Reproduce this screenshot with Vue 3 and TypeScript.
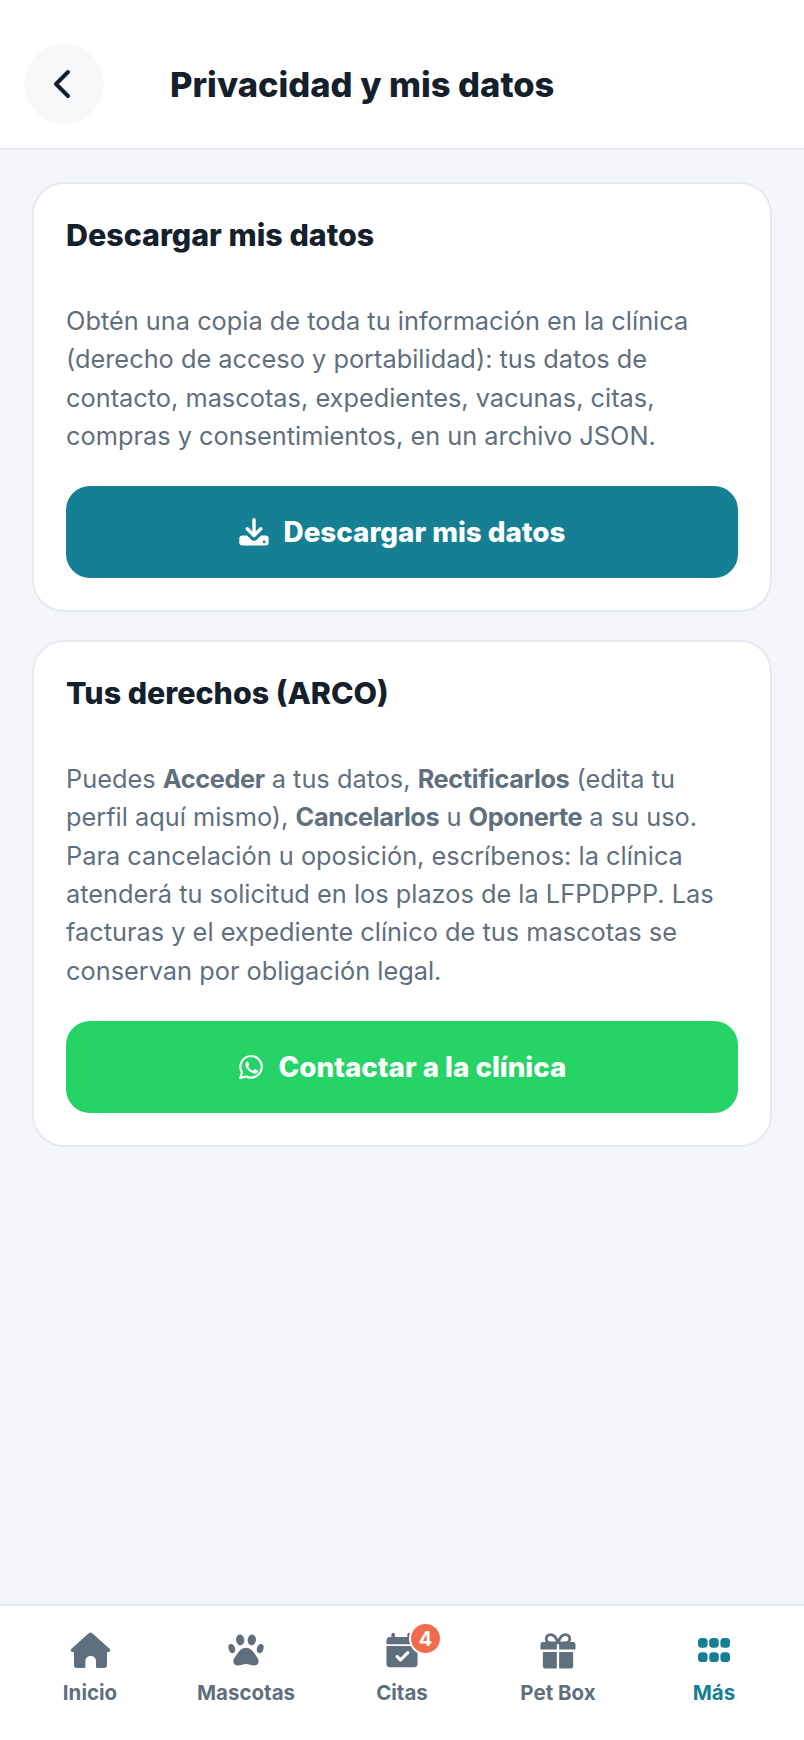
<script setup lang="ts">
const tabs = [
  { label: 'Inicio', icon: 'home', active: false },
  { label: 'Mascotas', icon: 'paw', active: false },
  { label: 'Citas', icon: 'cal', active: false, badge: 4 },
  { label: 'Pet Box', icon: 'gift', active: false },
  { label: 'Más', icon: 'grid', active: true },
]
</script>

<template>
  <div class="page">
    <header class="top">
      <button class="back" aria-label="Volver">
        <svg width="32" height="36" viewBox="0 0 32 36" fill="none" stroke="#14202b" stroke-width="4" stroke-linecap="round" stroke-linejoin="round"><path d="M20 6 8 18l12 12"/></svg>
      </button>
      <h1>Privacidad y mis datos</h1>
    </header>

    <main class="content">
      <section class="card">
        <h2>Descargar mis datos</h2>
        <p>Obtén una copia de toda tu información en la clínica (derecho de acceso y portabilidad): tus datos de contacto, mascotas, expedientes, vacunas, citas, compras y consentimientos, en un archivo JSON.</p>
        <button class="btn teal">
          <svg width="30" height="28" viewBox="0 0 30 28" fill="#fff"><path d="M13.300 1.800a1.700 1.700 0 0 1 3.400 0v11.600l3.900-3.900a1.700 1.700 0 0 1 2.400 2.400l-6.800 6.800a1.700 1.700 0 0 1-2.400 0l-6.800-6.800a1.700 1.700 0 0 1 2.400-2.400l3.900 3.900z"/><path d="M3.500 17.500H8l4 4a4.200 4.200 0 0 0 6 0l4-4h4.500a3.200 3.200 0 0 1 3.200 3.200v3.600a3.200 3.200 0 0 1-3.200 3.200H3.500a3.200 3.200 0 0 1-3.200-3.200v-3.600a3.200 3.200 0 0 1 3.200-3.200zm21.700 5a1.400 1.400 0 1 0 0 2.800 1.400 1.400 0 0 0 0-2.800z" fill-rule="evenodd"/></svg>
          <span>Descargar mis datos</span>
        </button>
      </section>

      <section class="card">
        <h2>Tus derechos (ARCO)</h2>
        <p>Puedes <b>Acceder</b> a tus datos, <b>Rectificarlos</b> (edita tu perfil aquí mismo), <b>Cancelarlos</b> u <b>Oponerte</b> a su uso. Para cancelación u oposición, escríbenos: la clínica atenderá tu solicitud en los plazos de la LFPDPPP. Las facturas y el expediente clínico de tus mascotas se conservan por obligación legal.</p>
        <button class="btn green">
          <svg width="26" height="26" viewBox="0 0 26 26" fill="none"><path d="M13.200 2a10.800 10.800 0 0 0-9.300 16.300L2.300 24l5.900-1.500A10.800 10.800 0 1 0 13.200 2z" stroke="#fff" stroke-width="2.200" stroke-linejoin="round"/><path d="M9.700 7.600c-.3 0-.8.100-1.200.6-.5.500-1.100 1.300-1.100 2.700s1.100 3 1.300 3.200c.1.200 2.100 3.400 5.300 4.600 2.600 1 3.200.8 3.700.7.600-.1 1.800-.7 2-1.400.3-.7.300-1.300.2-1.400-.1-.1-.3-.2-.6-.4l-2.200-1c-.3-.1-.5-.2-.7.100l-1 1.200c-.2.200-.4.300-.7.100-.3-.2-1.400-.5-2.600-1.600-1-.9-1.600-1.900-1.800-2.200-.2-.3 0-.5.100-.7l.5-.6.300-.5c.1-.2.100-.4 0-.6l-1-2.300c-.2-.5-.5-.5-.6-.5z" fill="#fff"/></svg>
          <span>Contactar a la clínica</span>
        </button>
      </section>
    </main>

    <nav class="tabs">
      <div v-for="t in tabs" :key="t.label" class="tab" :class="{ active: t.active }">
        <div class="icon">
          <svg v-if="t.icon === 'home'" width="41" height="36" viewBox="0 0 41 36" fill="currentColor"><path d="M20.500.5c.7 0 1.300.3 1.800.8l17.200 15.400c1.400 1.300.6 3.300-1.200 3.300H37v13a3 3 0 0 1-3 3h-6.500a1.500 1.500 0 0 1-1.500-1.500v-5.500a5.300 5.300 0 0 0-10.600 0v5.500a1.500 1.500 0 0 1-1.500 1.500H7a3 3 0 0 1-3-3V20H2.700c-1.800 0-2.600-2-1.200-3.300L18.700 1.300c.5-.5 1.100-.8 1.800-.8z"/></svg>
          <svg v-else-if="t.icon === 'paw'" width="36" height="32" viewBox="0 0 38 34" fill="currentColor"><ellipse cx="12.800" cy="6.300" rx="4.400" ry="5.800" transform="rotate(-6 12.800 6.300)"/><ellipse cx="25.200" cy="6.300" rx="4.400" ry="5.800" transform="rotate(6 25.200 6.300)"/><ellipse cx="3.900" cy="15.500" rx="3.400" ry="5" transform="rotate(-18 3.900 15.500)"/><ellipse cx="34.100" cy="15.500" rx="3.400" ry="5" transform="rotate(18 34.100 15.500)"/><path d="M19 14.500c4.500 0 7.500 3.500 10 7.500 1.600 2.600 3.500 4.500 3.500 7 0 3-2.400 4.500-5 4.500-2.800 0-5.500-1.500-8.500-1.500s-5.700 1.500-8.500 1.500c-2.600 0-5-1.500-5-4.500 0-2.500 1.900-4.400 3.500-7 2.500-4 5.500-7.500 10-7.500z"/></svg>
          <svg v-else-if="t.icon === 'cal'" width="32" height="36" viewBox="0 0 36 40" fill="currentColor"><path d="M8 .5a2 2 0 0 1 2 2v3h14v-3a2 2 0 0 1 4 0v3h3.500a4 4 0 0 1 4 4v4H.5v-4a4 4 0 0 1 4-4H6v-3a2 2 0 0 1 2-2z"/><path fill-rule="evenodd" d="M.5 15.500h35v20a4 4 0 0 1-4 4h-27a4 4 0 0 1-4-4zm25.300 6.300a1.800 1.800 0 0 0-2.500 0l-7 7-2.800-2.800a1.800 1.800 0 0 0-2.500 2.500l4 4a1.800 1.800 0 0 0 2.500 0l8.300-8.200a1.800 1.800 0 0 0 0-2.500z"/></svg>
          <svg v-else-if="t.icon === 'gift'" width="36" height="37" viewBox="0 0 38 38" fill="none"><path d="M19 11c-1.500-5-4.300-8.800-8-8.800a4.400 4.400 0 0 0 0 8.800zm0 0c1.500-5 4.300-8.800 8-8.800a4.400 4.400 0 0 1 0 8.800z" stroke="currentColor" stroke-width="3" stroke-linejoin="round"/><path d="M3 10h14.800v8H.5v-5.500A2.500 2.500 0 0 1 3 10zm17.200 0H35a2.500 2.500 0 0 1 2.500 2.500V18H20.200zM3 20.500h14.800V38H6a3 3 0 0 1-3-3zm17.200 0H35V35a3 3 0 0 1-3 3H20.200z" fill="currentColor"/></svg>
          <svg v-else width="32" height="24" viewBox="0 0 32 24" fill="currentColor"><rect x="0" y="0" width="9.600" height="9.800" rx="3.600"/><rect x="11.200" y="0" width="9.600" height="9.800" rx="3.600"/><rect x="22.400" y="0" width="9.600" height="9.800" rx="3.600"/><rect x="0" y="14.200" width="9.600" height="9.800" rx="3.600"/><rect x="11.200" y="14.200" width="9.600" height="9.800" rx="3.600"/><rect x="22.400" y="14.200" width="9.600" height="9.800" rx="3.600"/></svg>
          <span v-if="t.badge" class="badge">{{ t.badge }}</span>
        </div>
        <span class="label">{{ t.label }}</span>
      </div>
    </nav>
  </div>
</template>

<style scoped>
.page {
  width: 804px;
  height: 1740px;
  display: flex;
  flex-direction: column;
  background: #f4f6fa;
  font-family: Inter, "Liberation Sans", sans-serif;
  color: #14202b;
}
.top {
  height: 150px;
  box-sizing: border-box;
  flex: none;
  background: #fff;
  border-bottom: 2px solid #e5e9f0;
  display: flex;
  align-items: center;
  padding: 20px 24px 0;
  gap: 66px;
}
.back {
  width: 80px;
  height: 80px;
  border: 0;
  padding: 0;
  border-radius: 50%;
  background: #f6f8fa;
  display: flex;
  align-items: center;
  justify-content: center;
}
h1 {
  margin: 0;
  font-size: 34.500px;
  font-weight: 800;
}
.content {
  flex: 1;
  padding: 32px 32px;
  display: flex;
  flex-direction: column;
  gap: 28px;
}
.card {
  background: #fff;
  border: 2px solid #e5e9f0;
  border-radius: 32px;
  padding: 32px;
  display: flex;
  flex-direction: column;
}
h2 {
  margin: 0 0 48px;
  font-size: 30.400px;
  line-height: 38px;
  font-weight: 800;
}
p {
  margin: 0 0 31px;
  font-size: 25.350px;
  line-height: 38.300px;
  color: #5f6f7e;
}
p b {
  font-weight: 700;
  letter-spacing: -0.400px;
}
.btn {
  height: 92px;
  border: 0;
  border-radius: 24px;
  color: #fff;
  font: 800 27.800px Inter, "Liberation Sans", sans-serif;
  display: flex;
  align-items: center;
  justify-content: center;
  gap: 15px;
}
.teal { background: #167f94; }
.green { background: #25d366; }
.tabs {
  height: 136px;
  box-sizing: border-box;
  flex: none;
  background: #fff;
  border-top: 2px solid #e5e9f0;
  display: grid;
  grid-template-columns: repeat(5, 1fr);
  padding: 22px 12px 0;
}
.tab {
  display: flex;
  flex-direction: column;
  align-items: center;
  color: #5f6f7e;
}
.tab.active { color: #167f94; }
.icon {
  position: relative;
  height: 44px;
  display: flex;
  align-items: center;
  justify-content: center;
}
.badge {
  position: absolute;
  top: -4px;
  right: -22px;
  width: 29px;
  height: 29px;
  border-radius: 50%;
  background: #f26b4b;
  color: #fff;
  font-size: 20px;
  font-weight: 700;
  display: flex;
  align-items: center;
  justify-content: center;
  box-shadow: 0 0 0 2px #fff;
}
.label {
  margin-top: 8px;
  font-size: 20.500px;
  font-weight: 700;
}
</style>
